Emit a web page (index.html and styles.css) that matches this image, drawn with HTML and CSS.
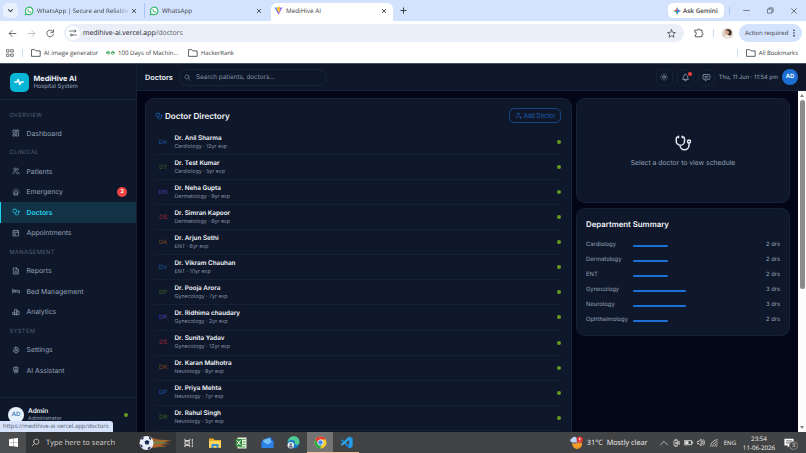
FILE: index.html
```html
<!DOCTYPE html>
<html lang="en">
<head>
    <meta charset="UTF-8">
    <meta name="viewport" content="width=device-width, initial-scale=1.0">
    <title>MediHive AI</title>
    <link rel="stylesheet" href="styles.css">
</head>
<body>
    <svg class="defs" width="0" height="0">
        <symbol id="whatsapp" viewBox="0 0 24 24"><path d="M3 21l1.6-4.8A9 9 0 1 1 8 19.6z" fill="#fff" stroke="#2fb768" stroke-width="2.6"/><path d="M8.5 7.5c-1.5 2.500 3.500 9 7.500 8.500l1-2-2.500-1.300-1.200 1c-1.200-.6-2-1.500-2.600-2.700l1-1.200-1-2.300z" fill="#2fb768" stroke="none"/></symbol>
        <symbol id="close" viewBox="0 0 24 24"><path d="M5 5l14 14M19 5L5 19"/></symbol>
        <symbol id="folder" viewBox="0 0 24 24"><path d="M2 4h7l3 3h10v13H2z"/></symbol>
        <symbol id="stethoscope" viewBox="0 0 24 24"><path d="M6 4H5a2 2 0 0 0-2 2v3.500a5.500 5.500 0 0 0 11 0V6a2 2 0 0 0-2-2h-1M8 15a6 6 0 1 0 12 0v-3M11 3v2M6 3v2"/><circle cx="20" cy="10" r="2"/></symbol>
        <symbol id="search" viewBox="0 0 24 24"><circle cx="10" cy="10" r="7"/><path d="M21 21l-6-6"/></symbol>
    </svg>

    <div class="tab-strip">
        <div class="tab-menu"><svg class="icon s7 bold" viewBox="0 0 24 24"><path d="M5 9l7 7 7-7"/></svg></div>
        <div class="tab tab-first"><svg class="icon s10"><use href="#whatsapp"/></svg><span class="tab-title fade">WhatsApp | Secure and Reliable</span><svg class="icon s6 bold"><use href="#close"/></svg></div>
        <div class="tab tab-second"><svg class="icon s10"><use href="#whatsapp"/></svg><span class="tab-title">WhatsApp</span><svg class="icon s6 bold"><use href="#close"/></svg></div>
        <div class="tab active">
            <svg class="s9" viewBox="0 0 24 24"><defs><linearGradient id="vite" x1="0" y1="0" x2="1" y2="1"><stop offset="0" stop-color="#41a4ff"/><stop offset="1" stop-color="#bd34fe"/></linearGradient></defs><path d="M1 3l11 20L23 3l-11 2z" fill="url(#vite)"/><path d="M16 1L8 3l-.5 9 3-.5-.5 4 2.500-1L12 20l6-11-3 .5z" fill="#ffc131"/></svg>
            <span class="tab-title">MediHive AI</span><svg class="icon s6 bold"><use href="#close"/></svg>
        </div>
        <svg class="icon s7 bold new-tab" viewBox="0 0 24 24"><path d="M12 3v18M3 12h18"/></svg>
        <div class="gemini"><svg class="s8" viewBox="0 0 24 24"><path d="M12 0q1.500 10.500 12 12H0Q10.500 10.500 12 0z" fill="#e8594a"/><path d="M0 12h24Q13.500 13.500 12 24 10.500 13.500 0 12z" fill="#3aa96b"/><path d="M12 0q1.500 10.500 12 12-10.500 1.500-12 12z" fill="#3b82f6"/></svg>Ask Gemini</div>
        <div class="window-buttons">
            <svg class="icon s7" viewBox="0 0 24 24"><path d="M2 12h20"/></svg>
            <svg class="icon s7" viewBox="0 0 24 24"><path d="M3 7h14v14H3zM7 7V3h14v14h-4"/></svg>
            <svg class="icon s8"><use href="#close"/></svg>
        </div>
    </div>

    <div class="toolbar">
        <svg class="icon s9" viewBox="0 0 24 24"><path d="M21 12H4M11 4l-8 8 8 8"/></svg>
        <svg class="icon s9 muted" viewBox="0 0 24 24"><path d="M3 12h17M13 4l8 8-8 8"/></svg>
        <svg class="icon s9" viewBox="0 0 24 24"><path d="M19 7a9 9 0 1 0 1 7M20 2v7h-7"/></svg>
        <div class="address">
            <span class="site-info"><svg class="icon s8" viewBox="0 0 24 24"><path d="M11 6H1M23 18H13"/><circle cx="17" cy="6" r="3"/><circle cx="7" cy="18" r="3"/></svg></span>
            <span class="url">medihive-ai.vercel.app<span>/doctors</span></span>
            <svg class="icon s9" viewBox="0 0 24 24"><path d="M12 2l3 7 7.500.6-5.700 5 1.700 7.400L12 18l-6.500 4 1.700-7.400-5.700-5L9 9z"/></svg>
        </div>
        <svg class="icon s10 extensions" viewBox="0 0 24 24"><path d="M3 5h6a2.500 2.500 0 0 1 5 0h5v6a2.500 2.500 0 0 1 0 5v5H3v-5a3 3 0 0 0 0-6z"/></svg>
        <span class="divider"></span>
        <svg class="s11 profile" viewBox="0 0 24 24"><circle cx="12" cy="12" r="12" fill="#ddd0c8"/><path d="M8 6c3-6 14-3 13 5-1 5-5 7-8 6z" fill="#3a2625"/><circle cx="11" cy="10" r="4.500" fill="#dba989"/><path d="M5 21c1-8 12-8 13-1-4 5-9 4-13 1z" fill="#f2e7df"/></svg>
        <div class="action">Action required<svg class="s8" viewBox="0 0 24 24" fill="#334"><circle cx="12" cy="4" r="2.500"/><circle cx="12" cy="12" r="2.500"/><circle cx="12" cy="20" r="2.500"/></svg></div>
    </div>

    <div class="bookmarks">
        <svg class="icon s8" viewBox="0 0 24 24"><path d="M2 2h7v7H2zM15 2h7v7h-7zM2 15h7v7H2zM15 15h7v7h-7z"/></svg>
        <span class="divider"></span>
        <span class="bookmark b1"><svg class="icon s10"><use href="#folder"/></svg>AI image generator</span>
        <span class="bookmark b2"><svg class="icon gfg" viewBox="0 0 24 12"><path d="M8 3a4 4 0 1 0 2 3H1M16 3a4 4 0 1 1-2 3h9"/></svg>100 Days of Machin...</span>
        <span class="bookmark b3"><svg class="icon s10"><use href="#folder"/></svg>HackerRank</span>
        <span class="divider last"></span>
        <span class="bookmark"><svg class="icon s10"><use href="#folder"/></svg>All Bookmarks</span>
    </div>

    <div class="app">
        <aside class="sidebar">
            <div class="brand">
                <div class="brand-logo"><svg class="icon s10 bold" viewBox="0 0 24 24"><path d="M2 12h5l3-6 4 12 3-6h5"/></svg></div>
                <div><div class="brand-name">MediHive AI</div><div class="brand-sub">Hospital System</div></div>
            </div>
            <nav>
                <div class="nav-label">OVERVIEW</div>
                <a class="nav-item"><svg class="icon s8" viewBox="0 0 24 24"><path d="M4 3h6v9H4zM4 16h6v5H4zM14 12h6v9h-6zM14 3h6v5h-6z"/></svg>Dashboard</a>
                <div class="nav-label">CLINICAL</div>
                <a class="nav-item"><svg class="icon s8" viewBox="0 0 24 24"><circle cx="9" cy="7" r="4"/><path d="M3 21v-2a4 4 0 0 1 4-4h4a4 4 0 0 1 4 4v2M16 3.100a4 4 0 0 1 0 7.800M21 21v-2a4 4 0 0 0-3-3.900"/></svg>Patients</a>
                <a class="nav-item"><svg class="icon s8" viewBox="0 0 24 24"><path d="M8 16v-4a4 4 0 0 1 8 0v4M2 12h2M12 2v2M20 12h2M5 5l1.300 1.300M19 5l-1.300 1.300M6 17h12v4H6z"/></svg>Emergency<span class="badge">3</span></a>
                <a class="nav-item selected"><svg class="icon s8"><use href="#stethoscope"/></svg>Doctors</a>
                <a class="nav-item"><svg class="icon s8" viewBox="0 0 24 24"><path d="M4 5h16v16H4zM16 3v4M8 3v4M4 11h16M8 15h3v2H8z"/></svg>Appointments</a>
                <div class="nav-label">MANAGEMENT</div>
                <a class="nav-item"><svg class="icon s8" viewBox="0 0 24 24"><path d="M14 3v5h5M5 3h9l5 5v13H5zM9 9h1M9 13h6M9 17h6"/></svg>Reports</a>
                <a class="nav-item"><svg class="icon s8" viewBox="0 0 24 24"><path d="M2 6v12M22 18v-8H10v5M2 15h20"/><circle cx="6" cy="10" r="1.500"/></svg>Bed Management</a>
                <a class="nav-item"><svg class="icon s8" viewBox="0 0 24 24"><path d="M3 13h6v7H3zM15 9h6v11h-6zM9 4h6v16H9z"/></svg>Analytics</a>
                <div class="nav-label">SYSTEM</div>
                <a class="nav-item"><svg class="icon s8" viewBox="0 0 24 24"><path d="M10 3h4l1 3 3-1 2 3-1 3 2 2-2 4-3 0-1 4h-5l-1-4-4 0-1-4 2-2-1-3 3-3 2 1z"/><circle cx="12" cy="12" r="3"/></svg>Settings</a>
                <a class="nav-item"><svg class="icon s8" viewBox="0 0 24 24"><path d="M6 4h12v8H6zM12 2v2M9 12v9M15 12v9M5 16l4-2M15 14l4 2M9 18h6M10 8v.1M14 8v.1"/></svg>AI Assistant</a>
            </nav>
            <div class="user">
                <div class="user-avatar">AD</div>
                <div><div class="user-name">Admin</div><div class="user-role">Administrator</div></div>
                <span class="dot"></span>
            </div>
            <div class="status-url">https://medihive-ai.vercel.app/doctors</div>
        </aside>

        <div class="page">
            <header class="topbar">
                <div class="topbar-title">Doctors</div>
                <div class="search"><svg class="icon s7"><use href="#search"/></svg>Search patients, doctors...</div>
                <div class="tools">
                    <span class="tool"><svg class="icon s8" viewBox="0 0 24 24"><circle cx="12" cy="12" r="4"/><path d="M12 2v2M12 20v2M2 12h2M20 12h2M5 5l1.400 1.400M17.600 17.600L19 19M19 5l-1.400 1.400M6.400 17.600L5 19"/></svg></span>
                    <span class="tool"><svg class="icon s9" viewBox="0 0 24 24"><path d="M10 5a2 2 0 1 1 4 0 7 7 0 0 1 4 6v3a4 4 0 0 0 2 3H4a4 4 0 0 0 2-3v-3a7 7 0 0 1 4-6M9 17v1a3 3 0 0 0 6 0v-1"/></svg><span class="alert"></span></span>
                    <span class="tool"><svg class="icon s9" viewBox="0 0 24 24"><path d="M5 4h14a2 2 0 0 1 2 2v9a2 2 0 0 1-2 2h-5l-5 4v-4H5a2 2 0 0 1-2-2V6a2 2 0 0 1 2-2zM8 9h8M8 13h6"/></svg></span>
                    <span class="clock">Thu, 11 Jun · 11:54 pm</span>
                    <span class="avatar">AD</span>
                </div>
            </header>

            <div class="content">
                <main>
                    <section class="card directory">
                        <div class="card-head">
                            <svg class="icon s8"><use href="#stethoscope"/></svg>
                            <h2>Doctor Directory</h2>
                            <button class="add"><svg class="icon s7" viewBox="0 0 24 24"><circle cx="11" cy="7" r="4"/><path d="M5 21v-2a4 4 0 0 1 4-4h4M16 19h6M19 16v6"/></svg>Add Doctor</button>
                        </div>
                        <div class="doctor"><span class="initials blue">DA</span><div><b>Dr. Anil Sharma</b><small>Cardiology · 12yr exp</small></div><span class="dot"></span></div>
                        <div class="doctor"><span class="initials green">DT</span><div><b>Dr. Test Kumar</b><small>Cardiology · 5yr exp</small></div><span class="dot"></span></div>
                        <div class="doctor"><span class="initials purple">DN</span><div><b>Dr. Neha Gupta</b><small>Dermatology · 9yr exp</small></div><span class="dot"></span></div>
                        <div class="doctor"><span class="initials red">DS</span><div><b>Dr. Simran Kapoor</b><small>Dermatology · 6yr exp</small></div><span class="dot"></span></div>
                        <div class="doctor"><span class="initials orange">DA</span><div><b>Dr. Arjun Sethi</b><small>ENT · 6yr exp</small></div><span class="dot"></span></div>
                        <div class="doctor"><span class="initials blue">DV</span><div><b>Dr. Vikram Chauhan</b><small>ENT · 10yr exp</small></div><span class="dot"></span></div>
                        <div class="doctor"><span class="initials green">DP</span><div><b>Dr. Pooja Arora</b><small>Gynecology · 7yr exp</small></div><span class="dot"></span></div>
                        <div class="doctor"><span class="initials purple">DR</span><div><b>Dr. Ridhima chaudary</b><small>Gynecology · 2yr exp</small></div><span class="dot"></span></div>
                        <div class="doctor"><span class="initials red">DS</span><div><b>Dr. Sunita Yadav</b><small>Gynecology · 12yr exp</small></div><span class="dot"></span></div>
                        <div class="doctor"><span class="initials orange">DK</span><div><b>Dr. Karan Malhotra</b><small>Neurology · 8yr exp</small></div><span class="dot"></span></div>
                        <div class="doctor"><span class="initials blue">DP</span><div><b>Dr. Priya Mehta</b><small>Neurology · 7yr exp</small></div><span class="dot"></span></div>
                        <div class="doctor"><span class="initials green">DR</span><div><b>Dr. Rahul Singh</b><small>Neurology · 5yr exp</small></div><span class="dot"></span></div>
                    </section>
                    <div class="side">
                        <section class="card schedule">
                            <svg class="icon s18"><use href="#stethoscope"/></svg>
                            <p>Select a doctor to view schedule</p>
                        </section>
                        <section class="card summary">
                            <h3>Department Summary</h3>
                            <div class="dept"><span>Cardiology</span><i><em style="width: 28.5%"></em></i><span>2 drs</span></div>
                            <div class="dept"><span>Dermatology</span><i><em style="width: 28.5%"></em></i><span>2 drs</span></div>
                            <div class="dept"><span>ENT</span><i><em style="width: 28.5%"></em></i><span>2 drs</span></div>
                            <div class="dept"><span>Gynecology</span><i><em style="width: 43%"></em></i><span>3 drs</span></div>
                            <div class="dept"><span>Neurology</span><i><em style="width: 43%"></em></i><span>3 drs</span></div>
                            <div class="dept"><span>Ophthalmology</span><i><em style="width: 28.5%"></em></i><span>2 drs</span></div>
                        </section>
                    </div>
                </main>
                <div class="scrollbar"><span class="arrow up"></span><span class="thumb"></span><span class="arrow down"></span></div>
            </div>
        </div>
    </div>

    <div class="taskbar">
        <div class="start"><svg class="s9" viewBox="0 0 24 24" fill="#fff"><path d="M0 3l11-2v10H0zM12 1l12-1v11H12zM0 12h11v10L0 21zM12 12h12v12l-12-2z"/></svg></div>
        <div class="task-search">
            <svg class="icon s9 flip"><use href="#search"/></svg><span>Type here to search</span>
            <svg class="ball" viewBox="0 0 34 16"><path d="M12 2c7 4 13 2 21 4-6 1-9 1-13 2 5 0 8 0 11 1-5 0-8 1-11 1 4 0 6 1 8 2-7-1-11 1-17 1z" fill="#a8642f"/><path d="M12 5c6 3 11 1 17 2-6 1-10 2-16 1z" fill="#5d8b4c"/><circle cx="7.500" cy="8" r="7" fill="#e9eef8"/><path d="M5.500 6.500l2.500-1.500 2.500 1.500-1 3H6.500zM2 4l2-2 1 1-2 2zM10 1.800l2.500 1.700-1 1.500-1.500-1.500zM1 9l2.500 1.500v2l-1.500-.5zM9 12.500l3-1-1.500 2.500-2 .5z" fill="#1c2b58"/></svg>
        </div>
        <div class="apps">
            <span><svg class="icon s10" viewBox="0 0 24 24"><path d="M2 3v3h12V3M2 21v-3h12v3M3 9h10v6H3zM20 3v5M20 11v3M20 17v4"/></svg></span>
            <span><svg class="s12" viewBox="0 0 24 24"><path d="M0 3h9l2 3h13v16H0z" fill="#e9a920"/><path d="M0 8h24v13H0z" fill="#ffd75e"/><path d="M5 22v-8h14v8h-4v-4H9v4z" fill="#3b8ed0"/></svg></span>
            <span><svg class="s12" viewBox="0 0 24 24"><path d="M5 1h18v22H5z" fill="#e3f2df"/><path d="M15 5h6M15 10h6M15 15h6M8 20h13" stroke="#58a04d" stroke-width="2"/><path d="M1 4h13v15H1z" fill="#2f8a3e"/><path d="M4 7l7 9M11 7l-7 9" stroke="#fff" stroke-width="2"/></svg></span>
            <span><svg class="s13" viewBox="0 0 24 24"><path d="M1 9L16 1l7 7v14H1z" fill="#1864c7"/><path d="M4 7l13-4 3 9-8 4-8-5z" fill="#70bdf5"/><path d="M1 10l11 6 11-7v13H1z" fill="#2d82ea"/></svg></span>
            <span><svg class="s13" viewBox="0 0 24 24"><circle cx="12" cy="12" r="11" fill="#1677c8"/><path d="M1 11C3-3 24-3 23 12c-1 6-8 5-9 2 3-6-5-10-13-3z" fill="#4ecb92"/><circle cx="7" cy="17" r="6" fill="#dfe7ed"/><circle cx="7" cy="15.500" r="2" fill="#526070"/><path d="M3 21c1-4 7-4 8 0z" fill="#526070"/></svg></span>
            <span class="current"><svg class="s13" viewBox="0 0 24 24"><circle cx="12" cy="12" r="11" fill="#f8c92c"/><path d="M2.500 6.500a11 11 0 0 1 19 0H12l-5 8z" fill="#e34133"/><path d="M2.500 6.500A11 11 0 0 0 11 23l5-9-8 1z" fill="#2da94f"/><circle cx="12" cy="12" r="5.500" fill="#fff"/><circle cx="12" cy="12" r="4.200" fill="#4285f4"/></svg></span>
            <span class="open"><svg class="s13" viewBox="0 0 24 24"><path d="M17 1l6 3v16l-6 3L1 8l3-2 13 11z" fill="#1686d4"/><path d="M17 1v6L4 18l-3-2z" fill="#33a7ee"/><path d="M17 1l6 3v16l-6 3z" fill="#269bea"/></svg></span>
        </div>
        <div class="tray">
            <svg class="weather" viewBox="0 0 24 24"><path d="M4 13c6 2 12 0 15-5 9 10-3 20-11 14-3-2-4-5-4-9z" fill="#f29b2d"/><path d="M2 11a4 4 0 0 1 2-7c3-5 9-2 9 2 4 1 3 6 0 6H4z" fill="#b8d5f7"/><circle cx="18" cy="7" r="6" fill="#d93631"/><path d="M18 3v5M18 10v1" stroke="#fff" stroke-width="2"/></svg>
            <span class="temp">31°C&nbsp; Mostly clear</span>
            <svg class="icon s8" viewBox="0 0 24 24"><path d="M2 17L12 7l10 10"/></svg>
            <svg class="icon s8" viewBox="0 0 24 24"><path d="M7 5h10v14H7zM9 1h6M9 23h6M18 9l4-2v9l-4-2"/><circle cx="12" cy="12" r="2"/></svg>
            <svg class="icon s9" viewBox="0 0 24 24"><path d="M1 7h19v11H1zM23 10v5"/><path d="M4 10h7v5H4z" fill="currentColor"/></svg>
            <svg class="icon s9" viewBox="0 0 24 24"><path d="M1 9h4l6-6v18l-6-6H1zM15 8q3 4 0 8M18 5q5 7 0 14"/></svg>
            <svg class="icon s8" viewBox="0 0 24 24"><path d="M2 22A20 20 0 0 1 22 2M8 22A14 14 0 0 1 22 8M14 22a8 8 0 0 1 8-8M19 21h2"/></svg>
            <span class="lang">ENG</span>
            <span class="time">23:54<br>11-06-2026</span>
            <span class="notes"><svg class="s10" viewBox="0 0 24 24"><path d="M1 2h22v16h-9l-5 5v-5H1z" fill="#fff"/><path d="M5 7h14M5 12h12" stroke="#444" stroke-width="2"/></svg><span class="count">3</span></span>
        </div>
    </div>
</body>
</html>
```

FILE: styles.css
```css
* {
    box-sizing: border-box;
}

body {
    margin: 0;
    width: 806px;
    height: 453px;
    overflow: hidden;
    display: flex;
    flex-direction: column;
    font-family: "Open Sans", "Noto Sans", sans-serif;
    font-size: 7px;
    color: #3c4043;
    background: #fff;
    white-space: nowrap;
    text-rendering: geometricPrecision;
}

.defs { position: absolute; }
svg { flex-shrink: 0; display: block; }

.icon {
    fill: none;
    stroke: currentColor;
    stroke-width: 2;
    stroke-linecap: round;
    stroke-linejoin: round;
}

.bold { stroke-width: 3.5; }
.s6 { width: 6px; height: 6px; }
.s7 { width: 7px; height: 7px; }
.s8 { width: 8px; height: 8px; }
.s9 { width: 9px; height: 9px; }
.s10 { width: 10px; height: 10px; }
.s11 { width: 11px; height: 11px; }
.s12 { width: 12px; height: 12px; }
.s13 { width: 13px; height: 13px; }
.s18 { width: 18px; height: 18px; }

/* browser */
.tab-strip {
    height: 21px;
    flex-shrink: 0;
    display: flex;
    align-items: center;
    padding-left: 3px;
    background: #d3e2fd;
}

.tab-menu {
    width: 15px;
    height: 15px;
    border-radius: 5px;
    background: #e9f0fe;
    display: flex;
    align-items: center;
    justify-content: center;
}

.tab {
    display: flex;
    align-items: center;
    height: 15px;
}

.tab-title {
    flex: 1;
    margin-left: 3px;
    font-size: 6.3px;
}

.tab-first {
    width: 127px;
    padding: 0 7px 0 6px;
    border-right: 1px solid #a8c7fa;
}

.tab-second {
    width: 121px;
    padding: 0 4px 0 4px;
}

.fade {
    width: 90px;
    font-size: 6.1px;
    -webkit-mask-image: linear-gradient(90deg, #000 82%, transparent);
    mask-image: linear-gradient(90deg, #000 82%, transparent);
}

.tab.active {
    width: 122px;
    height: 18px;
    margin: 3px 0 0 5px;
    padding: 0 6px 3px 3px;
    border-radius: 6px 6px 0 0;
    background: #fff;
}

.new-tab { margin-left: 7px; }

.gemini {
    width: 56px;
    height: 15px;
    margin-left: auto;
    border-radius: 5px;
    background: #fff;
    display: flex;
    align-items: center;
    gap: 2px;
    padding-left: 5px;
    font-size: 6.4px;
    font-weight: 600;
}

.window-buttons {
    width: 77px;
    height: 8px;
    margin-left: 5px;
    padding: 0 8px 0 13px;
    border-left: 1px solid #a8c7fa;
    display: flex;
    align-items: center;
    justify-content: space-between;
}

.toolbar {
    height: 23px;
    flex-shrink: 0;
    display: flex;
    align-items: center;
    gap: 10px;
    padding: 1px 4px 0 8px;
}

.muted { color: #a9adb3; }

.address {
    width: 620px;
    height: 18px;
    margin-left: -1px;
    border-radius: 9px;
    background: #e9eef8;
    display: flex;
    align-items: center;
    padding: 0 8px 0 2px;
    flex-shrink: 0;
}

.site-info {
    width: 14px;
    height: 14px;
    border-radius: 50%;
    background: #fff;
    display: flex;
    align-items: center;
    justify-content: center;
}

.url {
    flex: 1;
    margin-left: 3px;
    font-size: 6.95px;
    color: #1f2023;
}

.url span { color: #5f6368; }

.divider {
    width: 1px;
    height: 8px;
    background: #cbdcf8;
}

.toolbar .divider { margin: 0 -2px 0 -1px; }
.profile { margin-right: -4px; }

.action {
    flex: 1;
    height: 18px;
    border-radius: 9px;
    background: #d3e2fd;
    display: flex;
    align-items: center;
    justify-content: space-between;
    padding: 0 4px 0 6px;
    font-size: 6px;
}

.bookmarks {
    height: 19px;
    flex-shrink: 0;
    display: flex;
    align-items: center;
    padding: 0 8px 2px 6px;
    font-size: 6.1px;
}

.bookmark {
    display: flex;
    align-items: center;
    gap: 3px;
}

.bookmarks .divider { margin: 0 8px; }
.bookmarks .last { margin-left: auto; }
.bookmarks .last + .bookmark { font-size: 5.9px; }
.b1 { width: 75px; }
.b2 { width: 82px; }
.b3 { font-size: 5.9px; }
.gfg { width: 9px; height: 5px; color: #2f9b50; }

/* app */
.app {
    height: 369px;
    flex-shrink: 0;
    display: flex;
    font-family: Inter, sans-serif;
    color: #94a3b8;
    background: #020617;
    border-top: 1px solid #46515f;
}

.sidebar {
    position: relative;
    width: 137px;
    display: flex;
    flex-direction: column;
    background: #0f172a;
    border-right: 1px solid #172136;
}

.brand {
    height: 36px;
    padding: 1px 0 0 9.5px;
    display: flex;
    align-items: center;
    gap: 5px;
    border-bottom: 1px solid #1a253a;
}

.brand-logo {
    width: 19px;
    height: 19px;
    border-radius: 5px;
    background: #06b6d4;
    color: #fff;
    display: flex;
    align-items: center;
    justify-content: center;
}

.brand-name {
    font-size: 7.3px;
    line-height: 9px;
    font-weight: 700;
    color: #f1f5f9;
}

.brand-sub {
    font-size: 5.8px;
    line-height: 8px;
}

nav { padding-top: 5.6px; }

.nav-label {
    height: 17.3px;
    padding: 2px 0 0 9.5px;
    font-size: 5.7px;
    line-height: 15.300px;
    letter-spacing: 0.4px;
    color: #536176;
}

.nav-item {
    height: 20.6px;
    display: flex;
    align-items: center;
    gap: 6.5px;
    padding: 0 9px 0 12px;
    font-size: 6.85px;
}

.nav-item.selected {
    padding-left: 11px;
    border-left: 1px solid #22d3ee;
    background: #123246;
    color: #22d3ee;
    font-weight: 600;
}

.badge {
    width: 10px;
    height: 10px;
    margin-left: auto;
    border-radius: 5px;
    background: #ef4444;
    color: #fff;
    font-size: 5.5px;
    font-weight: 600;
    line-height: 10px;
    text-align: center;
}

.user {
    margin-top: auto;
    height: 35px;
    padding: 0 8px 0 8px;
    display: flex;
    align-items: center;
    gap: 4px;
    border-top: 1px solid #1a253a;
}

.user-avatar {
    width: 16px;
    height: 16px;
    border-radius: 50%;
    background: #e6f1fb;
    color: #2467b2;
    font-size: 6px;
    font-weight: 500;
    line-height: 16px;
    text-align: center;
}

.user-name {
    font-size: 6.5px;
    line-height: 9px;
    font-weight: 600;
    color: #f1f5f9;
}

.user-role {
    font-size: 5.3px;
    line-height: 7px;
}

.dot {
    width: 4px;
    height: 4px;
    margin-left: auto;
    border-radius: 50%;
    background: #659b25;
}

.status-url {
    position: absolute;
    left: 0;
    bottom: 0;
    width: 113px;
    height: 11px;
    padding-left: 3px;
    border-radius: 0 3px 0 0;
    background: #d6e3fb;
    color: #56606f;
    font: 5.95px/11px "Open Sans", sans-serif;
}

.page {
    flex: 1;
    display: flex;
    flex-direction: column;
    min-width: 0;
}

.topbar {
    height: 27px;
    flex-shrink: 0;
    display: flex;
    align-items: center;
    padding: 0 8px;
    background: #0f172a;
    border-bottom: 1px solid #182338;
}

.topbar-title {
    width: 33.5px;
    font-size: 7.3px;
    font-weight: 600;
    color: #f1f5f9;
}

.search {
    width: 148px;
    height: 17px;
    padding-left: 4.5px;
    border: 1px solid #19253a;
    border-radius: 8px;
    display: flex;
    align-items: center;
    gap: 5px;
    font-size: 6.35px;
    color: #8290a5;
}

.tools {
    margin-left: auto;
    display: flex;
    align-items: center;
    gap: 4px;
    font-size: 5.8px;
}

.tool {
    position: relative;
    width: 17px;
    height: 17px;
    border: 1px solid #162136;
    border-radius: 5px;
    display: flex;
    align-items: center;
    justify-content: center;
}

.alert {
    position: absolute;
    top: 2px;
    right: 1px;
    width: 4px;
    height: 4px;
    border-radius: 50%;
    background: #ef4444;
}

.avatar {
    width: 16px;
    height: 16px;
    border-radius: 50%;
    background: #1d6fd6;
    color: #fff;
    font-weight: 600;
    line-height: 16px;
    text-align: center;
}

.content {
    flex: 1;
    display: flex;
    min-height: 0;
}

main {
    flex: 1;
    display: grid;
    grid-template-columns: 426.500px 214px;
    gap: 4.500px;
    padding: 7px 7px 0 8px;
    overflow: hidden;
}

.card {
    background: #0f172a;
    border: 1px solid #172238;
    border-radius: 9px;
}

.directory {
    height: 420px;
    padding: 9px 9.5px 0 9px;
}

.card-head {
    height: 15px;
    margin-bottom: 7px;
    display: flex;
    align-items: center;
    color: #1d63bd;
}

h2, h3, p { margin: 0; }

h2 {
    margin-left: 2px;
    font-size: 8.1px;
    font-weight: 600;
    color: #f1f5f9;
}

.add {
    width: 52px;
    height: 15px;
    margin-left: auto;
    padding: 0;
    border: 1px solid #174783;
    border-radius: 5px;
    background: none;
    display: flex;
    align-items: center;
    justify-content: center;
    gap: 2px;
    font-family: inherit;
    font-size: 5.9px;
    color: #2060b5;
}

.doctor {
    height: 25.07px;
    display: flex;
    align-items: center;
    border-bottom: 1px solid #162034;
}

.doctor b {
    display: block;
    padding-top: 0.6px;
    font-size: 6.35px;
    line-height: 9px;
    font-weight: 600;
    color: #f1f5f9;
}

.doctor small {
    display: block;
    font-size: 5.3px;
    line-height: 8.600px;
    color: #8593a8;
}

.initials {
    width: 16px;
    margin-right: 3.5px;
    font-size: 6px;
    text-align: center;
}

.blue { color: #1c57a4; }
.green { color: #356422; }
.purple { color: #493fae; }
.red { color: #9b2939; }
.orange { color: #85471f; }

.side {
    display: flex;
    flex-direction: column;
    gap: 5px;
}

.schedule {
    height: 105px;
    display: flex;
    flex-direction: column;
    align-items: center;
    padding-top: 35px;
    font-size: 6.8px;
}

.schedule .icon { color: #e2e8f0; }
.schedule p { margin-top: 5.5px; }

.summary {
    height: 128px;
    padding: 10px 9px 0;
}

h3 {
    height: 18.5px;
    font-size: 7.8px;
    font-weight: 600;
    line-height: 10.5px;
    color: #f1f5f9;
}

.dept {
    height: 14.95px;
    display: flex;
    align-items: center;
    font-size: 5.85px;
}

.dept span:first-child { width: 46.5px; }
.dept span:last-child { margin-left: auto; }

.dept i {
    width: 125px;
    height: 2px;
    margin-top: 2px;
}

.dept em {
    display: block;
    height: 2px;
    border-radius: 1px;
    background: #1d6fd6;
}

.scrollbar {
    width: 8px;
    display: flex;
    flex-direction: column;
    align-items: center;
    background: #fcfcfc;
    padding: 3px 0;
}

.thumb {
    width: 5px;
    height: 189px;
    margin: 3px 0 auto;
    border-radius: 3px;
    background: #8b8b8b;
}

.arrow {
    border: 2.5px solid transparent;
    height: 3px;
}

.up { border-top: 0; border-bottom: 3px solid #858585; }
.down { border-bottom: 0; border-top: 3px solid #858585; }

/* taskbar */
.taskbar {
    flex: 1;
    display: flex;
    background: #424344;
    color: #f1f1f1;
}

.start {
    width: 26px;
    display: flex;
    align-items: center;
    justify-content: center;
    background: #4c4d4e;
}

.task-search {
    width: 150px;
    display: flex;
    align-items: center;
    padding-left: 5px;
    gap: 6px;
    background: #333435;
    color: #d4d4d4;
    font-size: 7.5px;
}

.flip { transform: scaleX(-1); }
.ball { width: 34px; height: 16px; margin-left: auto; margin-right: 3px; }
.apps { display: flex; }

.apps span {
    width: 26.2px;
    display: flex;
    align-items: center;
    justify-content: center;
}

.apps .current {
    background: #747474;
    border-bottom: 1px solid #f4bf98;
}

.apps .open { border-bottom: 1px solid #f4bf98; }

.tray {
    margin-left: auto;
    padding-right: 8px;
    display: flex;
    align-items: center;
    gap: 4px;
}

.weather { width: 13px; height: 13px; }
.temp { width: 69px; font-size: 7.3px; }
.lang { margin-left: 2px; font-size: 6px; }

.time {
    width: 34px;
    margin: 0 4px 0 2px;
    font-size: 6.2px;
    line-height: 9px;
    text-align: center;
}

.notes { position: relative; width: 14px; }

.count {
    position: absolute;
    left: 5px;
    top: 3px;
    width: 9px;
    height: 9px;
    border: 1px solid #8b8b8b;
    border-radius: 50%;
    background: #424344;
    font-size: 6px;
    line-height: 7px;
    text-align: center;
}
```
